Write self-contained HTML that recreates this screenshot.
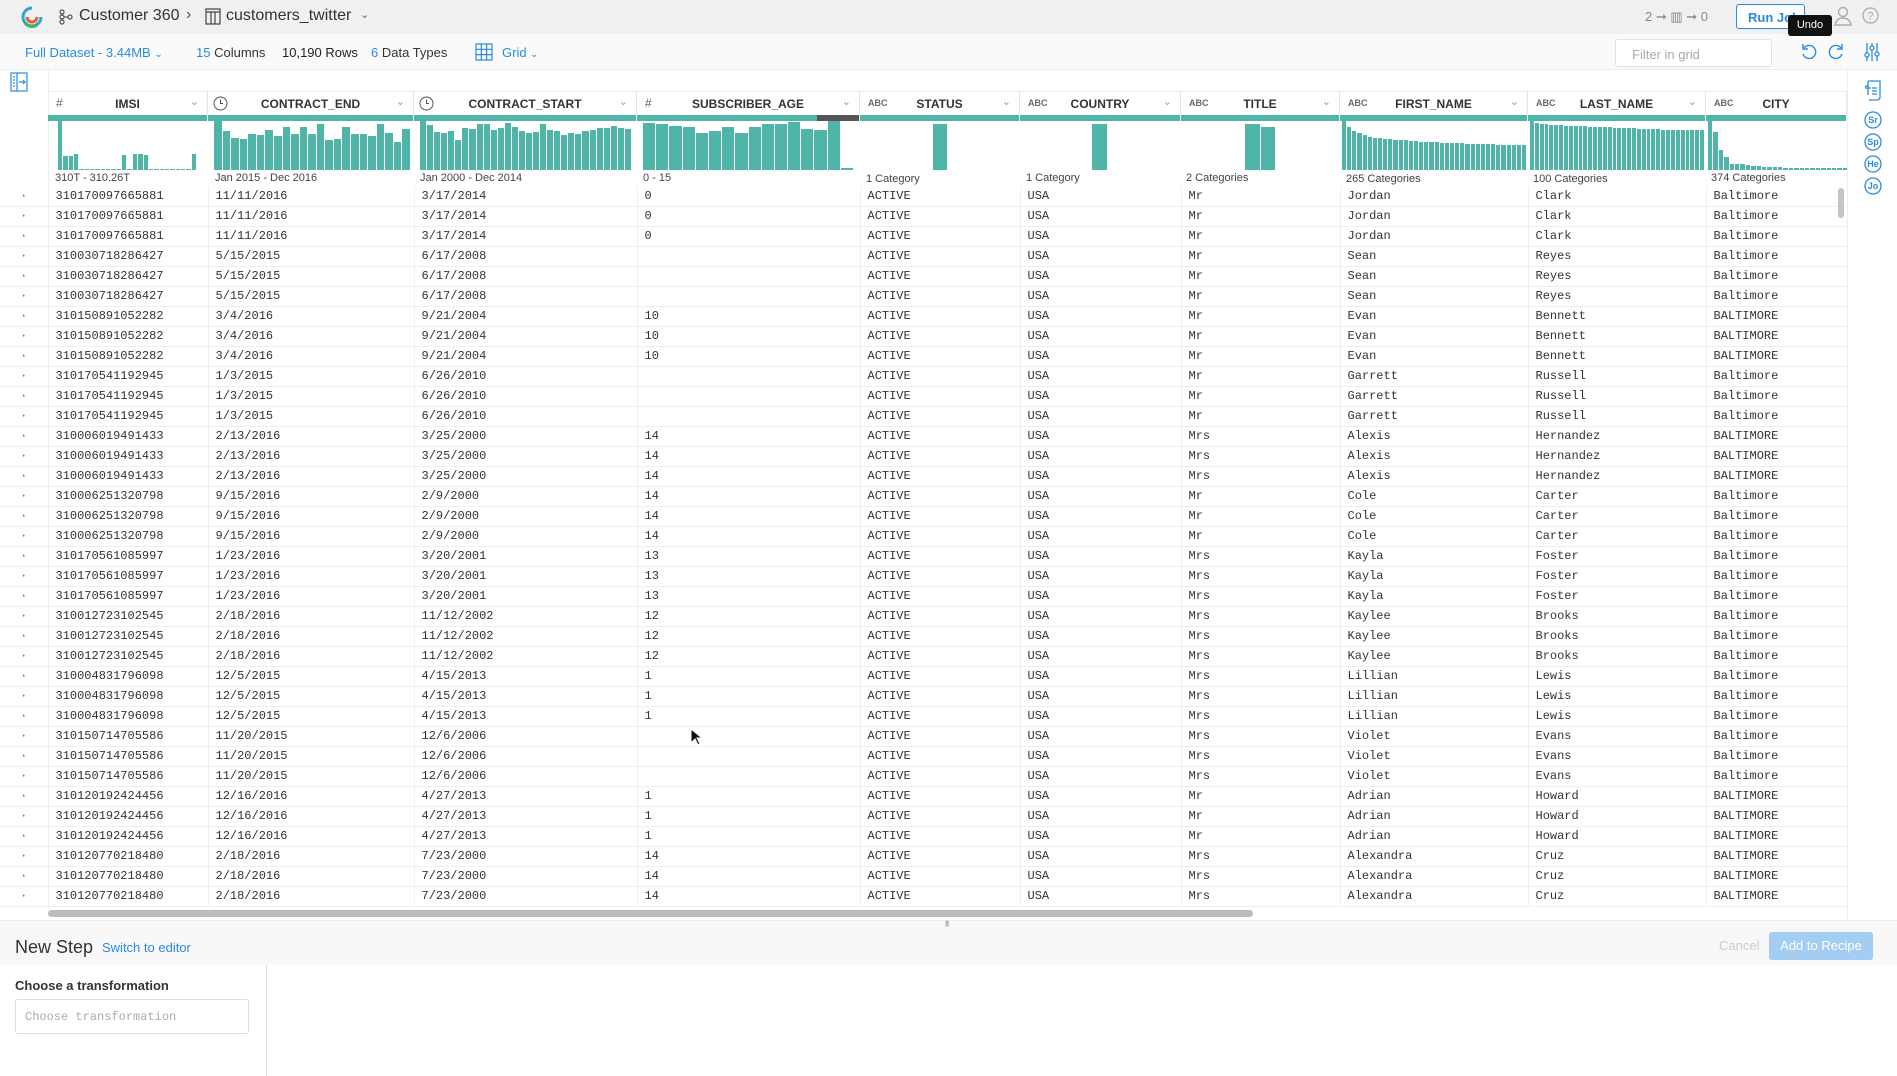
<!DOCTYPE html>
<html><head><meta charset="utf-8">
<style>
*{box-sizing:border-box;margin:0;padding:0}
body{width:1897px;height:1076px;overflow:hidden;background:#fff;font-family:"Liberation Sans",sans-serif;color:#333;position:relative}
.a{position:absolute}
.top{left:0;top:0;width:1897px;height:34px;background:#f0f0f0}
.bar2{left:0;top:34px;width:1897px;height:36px;background:#fafafa;border-bottom:1px solid #eee}
.blue{color:#2a8ae0}
.hdr{top:91px;height:24px;border-right:1px solid #e6e6e6;border-top:1px solid #eee;font-size:12px;font-weight:bold;color:#333}
.hdr .t{position:absolute;left:8px;top:6px;font-size:9px;color:#666;font-weight:bold}
.hdr .n{position:absolute;left:0;right:0;top:5px;text-align:center}
.hdr .c{position:absolute;right:8px;top:3px;color:#999;font-weight:normal;font-size:11px}
.tb{top:115px;height:6px;background:#50b5a9;border-right:1px solid #fff}
.hist{top:121px;height:49px;display:flex;align-items:flex-end;gap:1px;padding:0 2px}
.hist i{display:block;background:#50b5a9;flex:1}
.lbl{top:172px;font-size:11px;color:#444}
table{position:absolute;left:0;top:186px;border-collapse:collapse;table-layout:fixed;font-family:"Liberation Mono",monospace;font-size:12px;color:#333}
td{height:20px;border-bottom:1px solid #eee;border-right:1px solid #f0f0f0;padding-left:7px;white-space:nowrap;overflow:hidden;vertical-align:middle}
td:first-child{text-align:center;padding-left:0;color:#666}
</style></head><body>
<div class="a top"></div>
<svg class="a" style="left:20px;top:5px" width="24" height="24" viewBox="0 0 24 24"><path d="M12 3a9 9 0 1 0 9 9" fill="none" stroke="#2aa4d8" stroke-width="3"/><path d="M7 12a5 5 0 0 0 10 0" fill="none" stroke="#e8612c" stroke-width="3"/><path d="M5 18a9 9 0 0 0 12 2" fill="none" stroke="#3bb36a" stroke-width="3"/></svg>
<svg class="a" style="left:58px;top:9px" width="16" height="16" viewBox="0 0 16 16" fill="none" stroke="#555" stroke-width="1.2"><circle cx="4" cy="3" r="2"/><circle cx="4" cy="8" r="2"/><circle cx="4" cy="13" r="2"/><circle cx="12" cy="8" r="2"/><path d="M6 8h4"/></svg>
<div class="a" style="left:79px;top:7px;font-size:16px;color:#333">Customer 360</div>
<div class="a" style="left:186px;top:6px;font-size:16px;color:#555">›</div>
<svg class="a" style="left:205px;top:8px" width="16" height="17" viewBox="0 0 16 17" fill="none" stroke="#444" stroke-width="1.2"><rect x="1" y="1" width="14" height="15"/><path d="M1 4h14M6 4v12M10 4v12"/></svg>
<div class="a" style="left:226px;top:7px;font-size:16px;color:#333">customers_twitter</div>
<div class="a" style="left:360px;top:8px;font-size:11px;color:#666">⌄</div>
<div class="a" style="left:1645px;top:9px;font-size:13px;color:#888">2 ➞ ▥ ➞ 0</div>
<div class="a" style="left:1736px;top:4px;width:69px;height:25px;border:1px solid #2a8ae0;border-radius:3px;background:#fff;color:#2a8ae0;font-size:13px;font-weight:bold;padding:5px 0 0 11px">Run Job</div>
<svg class="a" style="left:1834px;top:6px" width="18" height="20" viewBox="0 0 18 20" fill="none" stroke="#aaa" stroke-width="1.4"><circle cx="9" cy="6" r="4.5"/><path d="M1 19c1-5 4-7 8-7s7 2 8 7z"/></svg>
<svg class="a" style="left:1862px;top:7px" width="17" height="17" viewBox="0 0 17 17" fill="none" stroke="#aaa" stroke-width="1.2"><circle cx="8.5" cy="8.5" r="7.5"/><text x="8.5" y="12.5" font-size="11" text-anchor="middle" fill="#aaa" stroke="none" font-family="Liberation Sans">?</text></svg>

<div class="a bar2"></div>
<div class="a blue" style="left:25px;top:45px;font-size:13px">Full Dataset - 3.44MB <span style="font-size:10px">⌄</span></div>
<div class="a" style="left:196px;top:45px;font-size:13px"><span class="blue">15</span> Columns</div>
<div class="a" style="left:282px;top:45px;font-size:13px;color:#222">10,190 Rows</div>
<div class="a" style="left:371px;top:45px;font-size:13px"><span class="blue">6</span> Data Types</div>
<svg class="a" style="left:475px;top:43px" width="18" height="18" viewBox="0 0 18 18" fill="none" stroke="#2a8ae0" stroke-width="1.2"><rect x="1" y="1" width="16" height="16"/><path d="M1 6.3h16M1 11.6h16M6.3 1v16M11.6 1v16"/></svg>
<div class="a blue" style="left:502px;top:45px;font-size:13px">Grid <span style="font-size:10px">⌄</span></div>
<div class="a" style="left:1615px;top:39px;width:157px;height:28px;border:1px solid #e2e2e2;border-radius:3px;background:#fff;font-size:13px;color:#aaa;padding:7px 0 0 16px">Filter in grid</div>
<svg class="a" style="left:1800px;top:43px" width="18" height="18" viewBox="0 0 18 18" fill="none" stroke="#2a8ae0" stroke-width="1.4"><path d="M4 5a6.5 6.5 0 1 1-1 6"/><path d="M3 1v5h5"/></svg>
<svg class="a" style="left:1827px;top:43px" width="18" height="18" viewBox="0 0 18 18" fill="none" stroke="#2a8ae0" stroke-width="1.4"><path d="M14 5a6.5 6.5 0 1 0 1 6"/><path d="M15 1v5h-5"/></svg>
<svg class="a" style="left:1864px;top:42px" width="16" height="20" viewBox="0 0 16 20" fill="none" stroke="#2a8ae0" stroke-width="1.3"><path d="M3 1v18M8 1v18M13 1v18"/><circle cx="3" cy="13" r="2" fill="#fff"/><circle cx="8" cy="6" r="2" fill="#fff"/><circle cx="13" cy="12" r="2" fill="#fff"/></svg>
<div class="a" style="left:1788px;top:15px;width:44px;height:21px;background:#111;color:#fff;font-size:11px;text-align:center;padding-top:4px;border-radius:3px">Undo</div>

<svg class="a" style="left:10px;top:72px" width="18" height="20" viewBox="0 0 18 20" fill="none" stroke="#2a8ae0" stroke-width="1.2"><rect x="1" y="1" width="16" height="18"/><path d="M7 1v18M3 5h2M3 8h2M3 11h2M3 14h2M9 10h6M13 8l2 2-2 2"/></svg>
<div class="a" style="left:48px;top:70px;width:1px;height:850px;background:#eee"></div>

<div class="a hdr" style="left:48px;width:160px"><span class="t" style="font-size:12px;font-weight:normal;top:4px">#</span><span class="n">IMSI</span><span class="c">⌄</span></div>
<div class="a hdr" style="left:208px;width:206px"><svg class="a" style="left:5px;top:4px" width="15" height="15" viewBox="0 0 15 15" fill="none" stroke="#555"><circle cx="7.5" cy="7.5" r="6.5"/><path d="M7.5 3.5v4h2.5"/></svg><span class="n">CONTRACT_END</span><span class="c">⌄</span></div>
<div class="a hdr" style="left:414px;width:223px"><svg class="a" style="left:5px;top:4px" width="15" height="15" viewBox="0 0 15 15" fill="none" stroke="#555"><circle cx="7.5" cy="7.5" r="6.5"/><path d="M7.5 3.5v4h2.5"/></svg><span class="n">CONTRACT_START</span><span class="c">⌄</span></div>
<div class="a hdr" style="left:637px;width:223px"><span class="t" style="font-size:12px;font-weight:normal;top:4px">#</span><span class="n">SUBSCRIBER_AGE</span><span class="c">⌄</span></div>
<div class="a hdr" style="left:860px;width:160px"><span class="t">ABC</span><span class="n">STATUS</span><span class="c">⌄</span></div>
<div class="a hdr" style="left:1020px;width:161px"><span class="t">ABC</span><span class="n">COUNTRY</span><span class="c">⌄</span></div>
<div class="a hdr" style="left:1181px;width:159px"><span class="t">ABC</span><span class="n">TITLE</span><span class="c">⌄</span></div>
<div class="a hdr" style="left:1340px;width:188px"><span class="t">ABC</span><span class="n">FIRST_NAME</span><span class="c">⌄</span></div>
<div class="a hdr" style="left:1528px;width:178px"><span class="t">ABC</span><span class="n">LAST_NAME</span><span class="c">⌄</span></div>
<div class="a hdr" style="left:1706px;width:141px"><span class="t">ABC</span><span class="n">CITY</span></div>

<div class="a tb" style="left:48px;width:160px"></div><div class="a tb" style="left:208px;width:206px"></div><div class="a tb" style="left:414px;width:223px"></div><div class="a tb" style="left:637px;width:223px;background:linear-gradient(90deg,#50b5a9 180px,#555 180px)"></div><div class="a tb" style="left:860px;width:160px"></div><div class="a tb" style="left:1020px;width:161px"></div><div class="a tb" style="left:1181px;width:159px"></div><div class="a tb" style="left:1340px;width:188px"></div><div class="a tb" style="left:1528px;width:178px"></div><div class="a tb" style="left:1706px;width:141px"></div>

<div class="a hist" style="left:56px;width:142px"><i style="height:100%"></i><i style="height:28%"></i><i style="height:28%"></i><i style="height:32%"></i><i style="height:2%"></i><i style="height:2%"></i><i style="height:2%"></i><i style="height:2%"></i><i style="height:2%"></i><i style="height:2%"></i><i style="height:2%"></i><i style="height:2%"></i><i style="height:30%"></i><i style="height:2%"></i><i style="height:32%"></i><i style="height:32%"></i><i style="height:30%"></i><i style="height:2%"></i><i style="height:2%"></i><i style="height:2%"></i><i style="height:2%"></i><i style="height:2%"></i><i style="height:2%"></i><i style="height:2%"></i><i style="height:2%"></i><i style="height:32%"></i></div>
<div class="a hist" style="left:212px;width:200px"><i style="height:100%"></i><i style="height:80%"></i><i style="height:66%"></i><i style="height:64%"></i><i style="height:74%"></i><i style="height:72%"></i><i style="height:82%"></i><i style="height:70%"></i><i style="height:88%"></i><i style="height:74%"></i><i style="height:88%"></i><i style="height:74%"></i><i style="height:94%"></i><i style="height:62%"></i><i style="height:64%"></i><i style="height:88%"></i><i style="height:74%"></i><i style="height:74%"></i><i style="height:70%"></i><i style="height:94%"></i><i style="height:76%"></i><i style="height:58%"></i><i style="height:84%"></i></div>
<div class="a hist" style="left:418px;width:215px"><i style="height:100%"></i><i style="height:92%"></i><i style="height:78%"></i><i style="height:76%"></i><i style="height:80%"></i><i style="height:62%"></i><i style="height:86%"></i><i style="height:84%"></i><i style="height:94%"></i><i style="height:94%"></i><i style="height:82%"></i><i style="height:86%"></i><i style="height:96%"></i><i style="height:88%"></i><i style="height:80%"></i><i style="height:76%"></i><i style="height:78%"></i><i style="height:94%"></i><i style="height:82%"></i><i style="height:80%"></i><i style="height:72%"></i><i style="height:76%"></i><i style="height:74%"></i><i style="height:80%"></i><i style="height:82%"></i><i style="height:86%"></i><i style="height:86%"></i><i style="height:90%"></i><i style="height:86%"></i><i style="height:84%"></i></div>
<div class="a hist" style="left:641px;width:214px"><i style="height:96%"></i><i style="height:94%"></i><i style="height:90%"></i><i style="height:88%"></i><i style="height:76%"></i><i style="height:80%"></i><i style="height:88%"></i><i style="height:76%"></i><i style="height:88%"></i><i style="height:94%"></i><i style="height:94%"></i><i style="height:98%"></i><i style="height:84%"></i><i style="height:82%"></i><i style="height:100%"></i><i style="height:4%"></i></div>
<div class="a" style="left:933px;top:124px;width:14px;height:46px;background:#50b5a9"></div>
<div class="a" style="left:1092px;top:124px;width:15px;height:46px;background:#50b5a9"></div>
<div class="a" style="left:1245px;top:124px;width:15px;height:46px;background:#50b5a9"></div><div class="a" style="left:1261px;top:127px;width:14px;height:43px;background:#50b5a9"></div>
<div class="a hist" style="left:1342px;width:184px;padding:0"><i style="height:100%"></i><i style="height:88%"></i><i style="height:80%"></i><i style="height:76%"></i><i style="height:72%"></i><i style="height:68%"></i><i style="height:66%"></i><i style="height:66%"></i><i style="height:64%"></i><i style="height:64%"></i><i style="height:62%"></i><i style="height:62%"></i><i style="height:62%"></i><i style="height:60%"></i><i style="height:60%"></i><i style="height:58%"></i><i style="height:58%"></i><i style="height:58%"></i><i style="height:58%"></i><i style="height:56%"></i><i style="height:56%"></i><i style="height:56%"></i><i style="height:56%"></i><i style="height:56%"></i><i style="height:54%"></i><i style="height:54%"></i><i style="height:54%"></i><i style="height:54%"></i><i style="height:54%"></i><i style="height:54%"></i><i style="height:52%"></i><i style="height:52%"></i><i style="height:52%"></i><i style="height:52%"></i><i style="height:52%"></i><i style="height:52%"></i></div>
<div class="a hist" style="left:1530px;width:174px;padding:0"><i style="height:100%"></i><i style="height:96%"></i><i style="height:94%"></i><i style="height:94%"></i><i style="height:92%"></i><i style="height:92%"></i><i style="height:92%"></i><i style="height:90%"></i><i style="height:90%"></i><i style="height:90%"></i><i style="height:90%"></i><i style="height:90%"></i><i style="height:88%"></i><i style="height:88%"></i><i style="height:88%"></i><i style="height:88%"></i><i style="height:88%"></i><i style="height:86%"></i><i style="height:86%"></i><i style="height:86%"></i><i style="height:86%"></i><i style="height:86%"></i><i style="height:84%"></i><i style="height:84%"></i><i style="height:84%"></i><i style="height:84%"></i><i style="height:84%"></i><i style="height:82%"></i><i style="height:82%"></i><i style="height:82%"></i><i style="height:82%"></i><i style="height:82%"></i><i style="height:82%"></i><i style="height:82%"></i><i style="height:82%"></i><i style="height:82%"></i></div>
<div class="a hist" style="left:1708px;width:139px;padding:0"><i style="height:100%"></i><i style="height:78%"></i><i style="height:40%"></i><i style="height:26%"></i><i style="height:12%"></i><i style="height:12%"></i><i style="height:12%"></i><i style="height:10%"></i><i style="height:8%"></i><i style="height:8%"></i><i style="height:6%"></i><i style="height:6%"></i><i style="height:6%"></i><i style="height:6%"></i><i style="height:5%"></i><i style="height:5%"></i><i style="height:5%"></i><i style="height:5%"></i><i style="height:5%"></i><i style="height:5%"></i><i style="height:5%"></i><i style="height:5%"></i><i style="height:5%"></i><i style="height:5%"></i><i style="height:5%"></i><i style="height:5%"></i></div>

<div class="a lbl" style="left:55px">310T - 310.26T</div>
<div class="a lbl" style="left:215px">Jan 2015 - Dec 2016</div>
<div class="a lbl" style="left:420px">Jan 2000 - Dec 2014</div>
<div class="a lbl" style="left:643px">0 - 15</div>
<div class="a lbl" style="left:866px;top:173px">1 Category</div>
<div class="a lbl" style="left:1026px">1 Category</div>
<div class="a lbl" style="left:1186px">2 Categories</div>
<div class="a lbl" style="left:1346px;top:173px">265 Categories</div>
<div class="a lbl" style="left:1533px;top:173px">100 Categories</div>
<div class="a lbl" style="left:1711px">374 Categories</div>

<table>
<colgroup><col style="width:48px"><col style="width:160px"><col style="width:206px"><col style="width:223px"><col style="width:223px"><col style="width:160px"><col style="width:161px"><col style="width:159px"><col style="width:188px"><col style="width:178px"><col style="width:141px"></colgroup>
<tr><td>·</td><td>310170097665881</td><td>11/11/2016</td><td>3/17/2014</td><td>0</td><td>ACTIVE</td><td>USA</td><td>Mr</td><td>Jordan</td><td>Clark</td><td>Baltimore</td></tr>
<tr><td>·</td><td>310170097665881</td><td>11/11/2016</td><td>3/17/2014</td><td>0</td><td>ACTIVE</td><td>USA</td><td>Mr</td><td>Jordan</td><td>Clark</td><td>Baltimore</td></tr>
<tr><td>·</td><td>310170097665881</td><td>11/11/2016</td><td>3/17/2014</td><td>0</td><td>ACTIVE</td><td>USA</td><td>Mr</td><td>Jordan</td><td>Clark</td><td>Baltimore</td></tr>
<tr><td>·</td><td>310030718286427</td><td>5/15/2015</td><td>6/17/2008</td><td></td><td>ACTIVE</td><td>USA</td><td>Mr</td><td>Sean</td><td>Reyes</td><td>Baltimore</td></tr>
<tr><td>·</td><td>310030718286427</td><td>5/15/2015</td><td>6/17/2008</td><td></td><td>ACTIVE</td><td>USA</td><td>Mr</td><td>Sean</td><td>Reyes</td><td>Baltimore</td></tr>
<tr><td>·</td><td>310030718286427</td><td>5/15/2015</td><td>6/17/2008</td><td></td><td>ACTIVE</td><td>USA</td><td>Mr</td><td>Sean</td><td>Reyes</td><td>Baltimore</td></tr>
<tr><td>·</td><td>310150891052282</td><td>3/4/2016</td><td>9/21/2004</td><td>10</td><td>ACTIVE</td><td>USA</td><td>Mr</td><td>Evan</td><td>Bennett</td><td>BALTIMORE</td></tr>
<tr><td>·</td><td>310150891052282</td><td>3/4/2016</td><td>9/21/2004</td><td>10</td><td>ACTIVE</td><td>USA</td><td>Mr</td><td>Evan</td><td>Bennett</td><td>BALTIMORE</td></tr>
<tr><td>·</td><td>310150891052282</td><td>3/4/2016</td><td>9/21/2004</td><td>10</td><td>ACTIVE</td><td>USA</td><td>Mr</td><td>Evan</td><td>Bennett</td><td>BALTIMORE</td></tr>
<tr><td>·</td><td>310170541192945</td><td>1/3/2015</td><td>6/26/2010</td><td></td><td>ACTIVE</td><td>USA</td><td>Mr</td><td>Garrett</td><td>Russell</td><td>Baltimore</td></tr>
<tr><td>·</td><td>310170541192945</td><td>1/3/2015</td><td>6/26/2010</td><td></td><td>ACTIVE</td><td>USA</td><td>Mr</td><td>Garrett</td><td>Russell</td><td>Baltimore</td></tr>
<tr><td>·</td><td>310170541192945</td><td>1/3/2015</td><td>6/26/2010</td><td></td><td>ACTIVE</td><td>USA</td><td>Mr</td><td>Garrett</td><td>Russell</td><td>Baltimore</td></tr>
<tr><td>·</td><td>310006019491433</td><td>2/13/2016</td><td>3/25/2000</td><td>14</td><td>ACTIVE</td><td>USA</td><td>Mrs</td><td>Alexis</td><td>Hernandez</td><td>BALTIMORE</td></tr>
<tr><td>·</td><td>310006019491433</td><td>2/13/2016</td><td>3/25/2000</td><td>14</td><td>ACTIVE</td><td>USA</td><td>Mrs</td><td>Alexis</td><td>Hernandez</td><td>BALTIMORE</td></tr>
<tr><td>·</td><td>310006019491433</td><td>2/13/2016</td><td>3/25/2000</td><td>14</td><td>ACTIVE</td><td>USA</td><td>Mrs</td><td>Alexis</td><td>Hernandez</td><td>BALTIMORE</td></tr>
<tr><td>·</td><td>310006251320798</td><td>9/15/2016</td><td>2/9/2000</td><td>14</td><td>ACTIVE</td><td>USA</td><td>Mr</td><td>Cole</td><td>Carter</td><td>Baltimore</td></tr>
<tr><td>·</td><td>310006251320798</td><td>9/15/2016</td><td>2/9/2000</td><td>14</td><td>ACTIVE</td><td>USA</td><td>Mr</td><td>Cole</td><td>Carter</td><td>Baltimore</td></tr>
<tr><td>·</td><td>310006251320798</td><td>9/15/2016</td><td>2/9/2000</td><td>14</td><td>ACTIVE</td><td>USA</td><td>Mr</td><td>Cole</td><td>Carter</td><td>Baltimore</td></tr>
<tr><td>·</td><td>310170561085997</td><td>1/23/2016</td><td>3/20/2001</td><td>13</td><td>ACTIVE</td><td>USA</td><td>Mrs</td><td>Kayla</td><td>Foster</td><td>Baltimore</td></tr>
<tr><td>·</td><td>310170561085997</td><td>1/23/2016</td><td>3/20/2001</td><td>13</td><td>ACTIVE</td><td>USA</td><td>Mrs</td><td>Kayla</td><td>Foster</td><td>Baltimore</td></tr>
<tr><td>·</td><td>310170561085997</td><td>1/23/2016</td><td>3/20/2001</td><td>13</td><td>ACTIVE</td><td>USA</td><td>Mrs</td><td>Kayla</td><td>Foster</td><td>Baltimore</td></tr>
<tr><td>·</td><td>310012723102545</td><td>2/18/2016</td><td>11/12/2002</td><td>12</td><td>ACTIVE</td><td>USA</td><td>Mrs</td><td>Kaylee</td><td>Brooks</td><td>Baltimore</td></tr>
<tr><td>·</td><td>310012723102545</td><td>2/18/2016</td><td>11/12/2002</td><td>12</td><td>ACTIVE</td><td>USA</td><td>Mrs</td><td>Kaylee</td><td>Brooks</td><td>Baltimore</td></tr>
<tr><td>·</td><td>310012723102545</td><td>2/18/2016</td><td>11/12/2002</td><td>12</td><td>ACTIVE</td><td>USA</td><td>Mrs</td><td>Kaylee</td><td>Brooks</td><td>Baltimore</td></tr>
<tr><td>·</td><td>310004831796098</td><td>12/5/2015</td><td>4/15/2013</td><td>1</td><td>ACTIVE</td><td>USA</td><td>Mrs</td><td>Lillian</td><td>Lewis</td><td>Baltimore</td></tr>
<tr><td>·</td><td>310004831796098</td><td>12/5/2015</td><td>4/15/2013</td><td>1</td><td>ACTIVE</td><td>USA</td><td>Mrs</td><td>Lillian</td><td>Lewis</td><td>Baltimore</td></tr>
<tr><td>·</td><td>310004831796098</td><td>12/5/2015</td><td>4/15/2013</td><td>1</td><td>ACTIVE</td><td>USA</td><td>Mrs</td><td>Lillian</td><td>Lewis</td><td>Baltimore</td></tr>
<tr><td>·</td><td>310150714705586</td><td>11/20/2015</td><td>12/6/2006</td><td></td><td>ACTIVE</td><td>USA</td><td>Mrs</td><td>Violet</td><td>Evans</td><td>Baltimore</td></tr>
<tr><td>·</td><td>310150714705586</td><td>11/20/2015</td><td>12/6/2006</td><td></td><td>ACTIVE</td><td>USA</td><td>Mrs</td><td>Violet</td><td>Evans</td><td>Baltimore</td></tr>
<tr><td>·</td><td>310150714705586</td><td>11/20/2015</td><td>12/6/2006</td><td></td><td>ACTIVE</td><td>USA</td><td>Mrs</td><td>Violet</td><td>Evans</td><td>Baltimore</td></tr>
<tr><td>·</td><td>310120192424456</td><td>12/16/2016</td><td>4/27/2013</td><td>1</td><td>ACTIVE</td><td>USA</td><td>Mr</td><td>Adrian</td><td>Howard</td><td>BALTIMORE</td></tr>
<tr><td>·</td><td>310120192424456</td><td>12/16/2016</td><td>4/27/2013</td><td>1</td><td>ACTIVE</td><td>USA</td><td>Mr</td><td>Adrian</td><td>Howard</td><td>BALTIMORE</td></tr>
<tr><td>·</td><td>310120192424456</td><td>12/16/2016</td><td>4/27/2013</td><td>1</td><td>ACTIVE</td><td>USA</td><td>Mr</td><td>Adrian</td><td>Howard</td><td>BALTIMORE</td></tr>
<tr><td>·</td><td>310120770218480</td><td>2/18/2016</td><td>7/23/2000</td><td>14</td><td>ACTIVE</td><td>USA</td><td>Mrs</td><td>Alexandra</td><td>Cruz</td><td>BALTIMORE</td></tr>
<tr><td>·</td><td>310120770218480</td><td>2/18/2016</td><td>7/23/2000</td><td>14</td><td>ACTIVE</td><td>USA</td><td>Mrs</td><td>Alexandra</td><td>Cruz</td><td>BALTIMORE</td></tr>
<tr><td>·</td><td>310120770218480</td><td>2/18/2016</td><td>7/23/2000</td><td>14</td><td>ACTIVE</td><td>USA</td><td>Mrs</td><td>Alexandra</td><td>Cruz</td><td>BALTIMORE</td></tr>
</table>

<div class="a" style="left:0;top:907px;width:1847px;height:13px;background:#fff"></div>
<div class="a" style="left:48px;top:910px;width:1205px;height:7px;background:#bdbdbd;border-radius:4px"></div>
<div class="a" style="left:1838px;top:188px;width:6px;height:30px;background:#c4c4c4;border-radius:3px"></div>
<div class="a" style="left:1847px;top:70px;width:1px;height:850px;background:#eee"></div>

<svg class="a" style="left:1863px;top:79px" width="20" height="22" viewBox="0 0 20 22" fill="none" stroke="#2a8ae0" stroke-width="1.3"><path d="M5 2h12v16a3 3 0 0 1-3 3H6M5 2v14M2 8l3-2M9 9h5M9 12h5M9 15h5M2 9h6"/></svg>
<svg class="a" style="left:1863px;top:111px" width="20" height="90" viewBox="0 0 20 90" fill="none" stroke="#2a8ae0" stroke-width="1.3" font-family="Liberation Sans" font-size="9" font-weight="bold"><circle cx="10" cy="9" r="8"/><circle cx="10" cy="31" r="8"/><circle cx="10" cy="53" r="8"/><circle cx="10" cy="75" r="8"/><g fill="#2a8ae0" stroke="none" text-anchor="middle"><text x="10" y="12">Sr</text><text x="10" y="34">Sp</text><text x="10" y="56">He</text><text x="10" y="78">Jo</text></g></svg>

<div class="a" style="left:0;top:920px;width:1897px;height:45px;background:#f8f8f9;border-top:1px solid #eee"></div>
<div class="a" style="left:945px;top:921px;font-size:6px;color:#aaa;letter-spacing:-1px">||||||</div>
<div class="a" style="left:15px;top:937px;font-size:18px;color:#333">New Step</div>
<div class="a blue" style="left:102px;top:940px;font-size:13px">Switch to editor</div>
<div class="a" style="left:1719px;top:938px;font-size:13px;color:#ccc">Cancel</div>
<div class="a" style="left:1769px;top:932px;width:104px;height:28px;background:#a4cdf2;border-radius:3px;color:#fff;font-size:13px;text-align:center;padding-top:6px">Add to Recipe</div>
<div class="a" style="left:266px;top:965px;width:1px;height:111px;background:#ddd"></div>
<div class="a" style="left:15px;top:978px;font-size:13px;font-weight:bold;color:#333">Choose a transformation</div>
<div class="a" style="left:15px;top:999px;width:234px;height:35px;border:1px solid #ddd;border-radius:3px;font-family:'Liberation Mono',monospace;font-size:12px;color:#aaa;padding:10px 0 0 9px">Choose transformation</div>
<svg class="a" style="left:690px;top:728px" width="12" height="18" viewBox="0 0 12 18"><path d="M1 1v14l4-4 3 6 2-1-3-6h5z" fill="#111" stroke="#fff"/></svg>
</body></html>
